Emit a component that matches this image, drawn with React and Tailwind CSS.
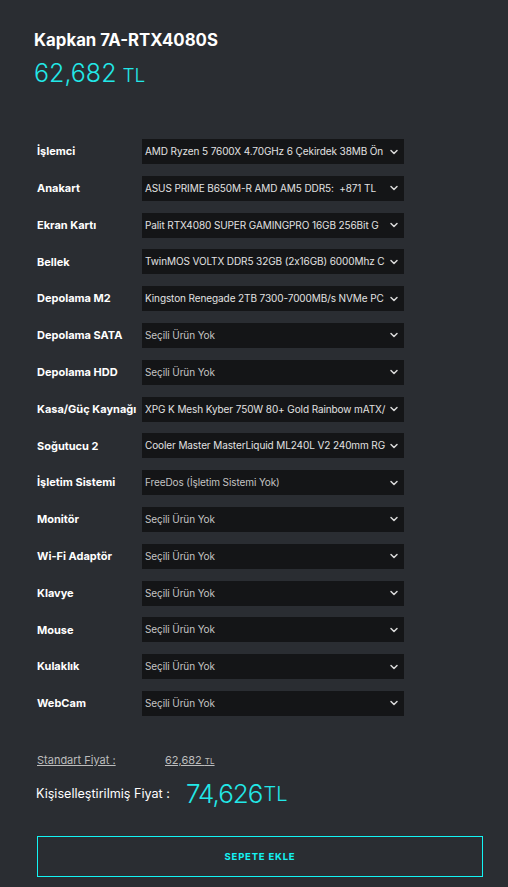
import { ChevronDown } from 'lucide-react';

const parts = [
  { label: 'İşlemci', value: 'AMD Ryzen 5 7600X 4.70GHz 6 Çekirdek 38MB Ön', selected: true },
  { label: 'Anakart', value: 'ASUS PRIME B650M-R AMD AM5 DDR5:  +871 TL', selected: true },
  { label: 'Ekran Kartı', value: 'Palit RTX4080 SUPER GAMINGPRO 16GB 256Bit G', selected: true },
  { label: 'Bellek', value: 'TwinMOS VOLTX DDR5 32GB (2x16GB) 6000Mhz C', selected: true },
  { label: 'Depolama M2', value: 'Kingston Renegade 2TB 7300-7000MB/s NVMe PC', selected: true },
  { label: 'Depolama SATA', value: 'Seçili Ürün Yok' },
  { label: 'Depolama HDD', value: 'Seçili Ürün Yok' },
  { label: 'Kasa/Güç Kaynağı', value: 'XPG K Mesh Kyber 750W 80+ Gold Rainbow mATX/', selected: true },
  { label: 'Soğutucu 2', value: 'Cooler Master MasterLiquid ML240L V2 240mm RG', selected: true },
  { label: 'İşletim Sistemi', value: 'FreeDos (İşletim Sistemi Yok)' },
  { label: 'Monitör', value: 'Seçili Ürün Yok' },
  { label: 'Wi-Fi Adaptör', value: 'Seçili Ürün Yok' },
  { label: 'Klavye', value: 'Seçili Ürün Yok' },
  { label: 'Mouse', value: 'Seçili Ürün Yok' },
  { label: 'Kulaklık', value: 'Seçili Ürün Yok' },
  { label: 'WebCam', value: 'Seçili Ürün Yok' },
];

const PartRow = ({ label, value, selected }) => (
  <div className="flex items-center h-[25px]">
    <div className="w-[105px] shrink-0 text-[11px] font-bold text-white whitespace-nowrap">{label}</div>
    <div className="flex items-center w-[262px] h-[25px] bg-[#141517] pl-[3px] pr-[4px]">
      <span
        className={`flex-1 min-w-0 whitespace-pre text-[10px] tracking-[-0.1px] ${
          selected ? 'text-[#e2e2e2]' : 'text-[#c4c4c4]'
        }`}
      >
        {value}
      </span>
      <ChevronDown className="w-[12px] h-[12px] ml-[2px] text-[#d8d8d8] shrink-0" strokeWidth={3} />
    </div>
  </div>
);

const App = () => {
  return (
    <div
      className="min-h-screen bg-[#2a2d32] pl-[34px] pr-[25px] pt-[30px] pb-[10px]"
      style={{ fontFamily: 'Inter, "Noto Sans", sans-serif' }}
    >
      <h1 className="text-[16.8px] font-bold text-white leading-[21px]">Kapkan 7A-RTX4080S</h1>
      <div className="mt-[7px] text-[#22e8e8] leading-[30px]">
        <span className="text-[25px] font-light">62,682</span>
        <span className="text-[19px] font-light ml-[6px]">TL</span>
      </div>

      <div className="mt-[48px] pl-[3px] flex flex-col gap-[11.8px]">
        {parts.map((p) => (
          <PartRow key={p.label} {...p} />
        ))}
      </div>

      <div className="mt-[36px] pl-[3px] flex items-center text-[11px] text-[#bdbdbd]">
        <span className="w-[128px] underline">Standart Fiyat :</span>
        <span className="underline">
          62,682 <span className="text-[8px]">TL</span>
        </span>
      </div>

      <div className="mt-[10px] pl-[2px] flex items-center">
        <span className="w-[150px] text-[12.6px] text-white">Kişiselleştirilmiş Fiyat :</span>
        <span className="text-[#22e8e8] text-[26px] font-light leading-[32px] tracking-[-1px]">74,626</span>
        <span className="text-[#22e8e8] text-[20px] font-light leading-[32px] ml-[1px]">TL</span>
      </div>

      <button className="mt-[26px] ml-[3px] w-[446px] h-[41px] border border-[#13f4f4] text-[#13f4f4] text-[9.5px] font-bold tracking-[0.8px]">
        SEPETE EKLE
      </button>
    </div>
  );
};

export default App;
